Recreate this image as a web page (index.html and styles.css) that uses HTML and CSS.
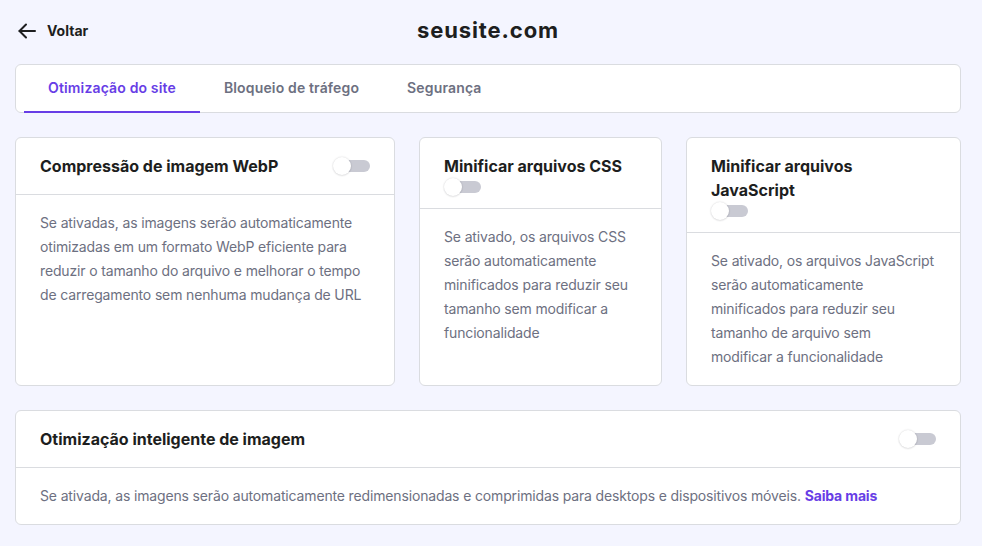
FILE: index.html
```html
<!DOCTYPE html>
<html lang="pt-BR">
<head>
<meta charset="utf-8">
<title>seusite.com</title>
<link rel="stylesheet" href="styles.css">
</head>
<body>
<div class="page">
  <header class="topbar">
    <a class="back" href="#">
      <svg class="back-icon" width="18" height="16" viewBox="0 0 18 16" fill="none" stroke="#1d1e20" stroke-width="2" stroke-linecap="round" stroke-linejoin="round">
        <path d="M17 8H1.5"/>
        <path d="M8 1.5L1.5 8L8 14.5"/>
      </svg>
      <span>Voltar</span>
    </a>
    <h1 class="site-title">seusite.com</h1>
  </header>

  <nav class="tabs">
    <a class="tab active" href="#">Otimização do site</a>
    <a class="tab" href="#">Bloqueio de tráfego</a>
    <a class="tab" href="#">Segurança</a>
  </nav>

  <section class="cards">
    <article class="card">
      <div class="card-head row">
        <h2 class="card-title">Compressão de imagem WebP</h2>
        <span class="toggle"><span class="knob"></span></span>
      </div>
      <p class="card-body">Se ativadas, as imagens serão automaticamente otimizadas em um formato WebP eficiente para reduzir o tamanho do arquivo e melhorar o tempo de carregamento sem nenhuma mudança de URL</p>
    </article>

    <article class="card">
      <div class="card-head stack">
        <h2 class="card-title">Minificar arquivos CSS</h2>
        <span class="toggle"><span class="knob"></span></span>
      </div>
      <p class="card-body">Se ativado, os arquivos CSS serão automaticamente minificados para reduzir seu tamanho sem modificar a funcionalidade</p>
    </article>

    <article class="card">
      <div class="card-head stack">
        <h2 class="card-title">Minificar arquivos<br>JavaScript</h2>
        <span class="toggle"><span class="knob"></span></span>
      </div>
      <p class="card-body">Se ativado, os arquivos JavaScript serão automaticamente minificados para reduzir seu tamanho de arquivo sem<br>modificar a funcionalidade</p>
    </article>
  </section>

  <article class="card wide">
    <div class="card-head row">
      <h2 class="card-title">Otimização inteligente de imagem</h2>
      <span class="toggle"><span class="knob"></span></span>
    </div>
    <p class="card-body">Se ativada, as imagens serão automaticamente redimensionadas e comprimidas para desktops e dispositivos móveis. <a class="link" href="#">Saiba mais</a></p>
  </article>
</div>
</body>
</html>
```

FILE: styles.css
```css
* {
  box-sizing: border-box;
}

html, body {
  margin: 0;
  padding: 0;
}

body {
  background: #f4f5ff;
  font-family: Inter, "DejaVu Sans", sans-serif;
  color: #1d1e20;
  -webkit-font-smoothing: antialiased;
}

.page {
  width: 946px;
  margin-left: 15px;
  display: flex;
  flex-direction: column;
}

/* top bar: back link on the left, site name centred */
.topbar {
  position: relative;
  height: 64px;
  display: flex;
  align-items: center;
  justify-content: center;
}

.back {
  position: absolute;
  left: 3px;
  top: 23px;
  display: flex;
  align-items: center;
  gap: 11px;
  text-decoration: none;
  color: #1d1e20;
  font-size: 14px;
  font-weight: 700;
  line-height: 16px;
}

.back-icon {
  display: block;
}

.site-title {
  margin: 0 0 4px;
  font-size: 22px;
  font-weight: 700;
  letter-spacing: 0.9px;
  line-height: 30px;
}

/* tab strip */
.tabs {
  display: flex;
  height: 49px;
  padding: 0 8px;
  background: #fff;
  border: 1px solid #dadce0;
  border-radius: 6px;
  margin-bottom: 24px;
}

.tab {
  display: flex;
  align-items: center;
  padding: 0 24px 2px;
  font-size: 14px;
  font-weight: 600;
  color: #6d7081;
  text-decoration: none;
  letter-spacing: 0.15px;
  border-bottom: 2px solid transparent;
  margin-bottom: -1px;
}

.tab.active {
  color: #673de6;
  border-bottom-color: #673de6;
}

/* cards */
.cards {
  display: grid;
  grid-template-columns: 380fr 243fr 275fr;
  gap: 24px;
  margin-bottom: 24px;
}

.card {
  background: #fff;
  border: 1px solid #dadce0;
  border-radius: 6px;
  display: flex;
  flex-direction: column;
}

.card-head {
  padding: 16px 24px;
  border-bottom: 1px solid #dadce0;
}

.card-head.row {
  display: flex;
  align-items: center;
  justify-content: space-between;
}

.card-head.stack {
  display: flex;
  flex-direction: column;
  align-items: flex-start;
  padding-bottom: 12px;
}

.card-title {
  margin: 0;
  font-size: 16px;
  font-weight: 700;
  line-height: 24px;
  letter-spacing: 0;
}

.card-body {
  margin: 0;
  padding: 16px 24px;
  font-size: 14px;
  line-height: 24px;
  color: #6d7081;
  letter-spacing: -0.15px;
}

.link {
  color: #673de6;
  font-weight: 700;
  text-decoration: none;
}

/* off-state switch: grey track with white knob on the left */
.toggle {
  position: relative;
  display: block;
  width: 37px;
  height: 18px;
  flex: none;
}

.toggle::before {
  content: "";
  position: absolute;
  left: 4px;
  right: 0;
  top: 3px;
  height: 12px;
  border-radius: 6px;
  background: #c9cad3;
}

.knob {
  position: absolute;
  left: 0;
  top: 0;
  width: 18px;
  height: 18px;
  border-radius: 50%;
  background: #fff;
  box-shadow: 0 0 2px rgba(29, 30, 32, 0.18), 0 1px 2px rgba(29, 30, 32, 0.08);
}
```
